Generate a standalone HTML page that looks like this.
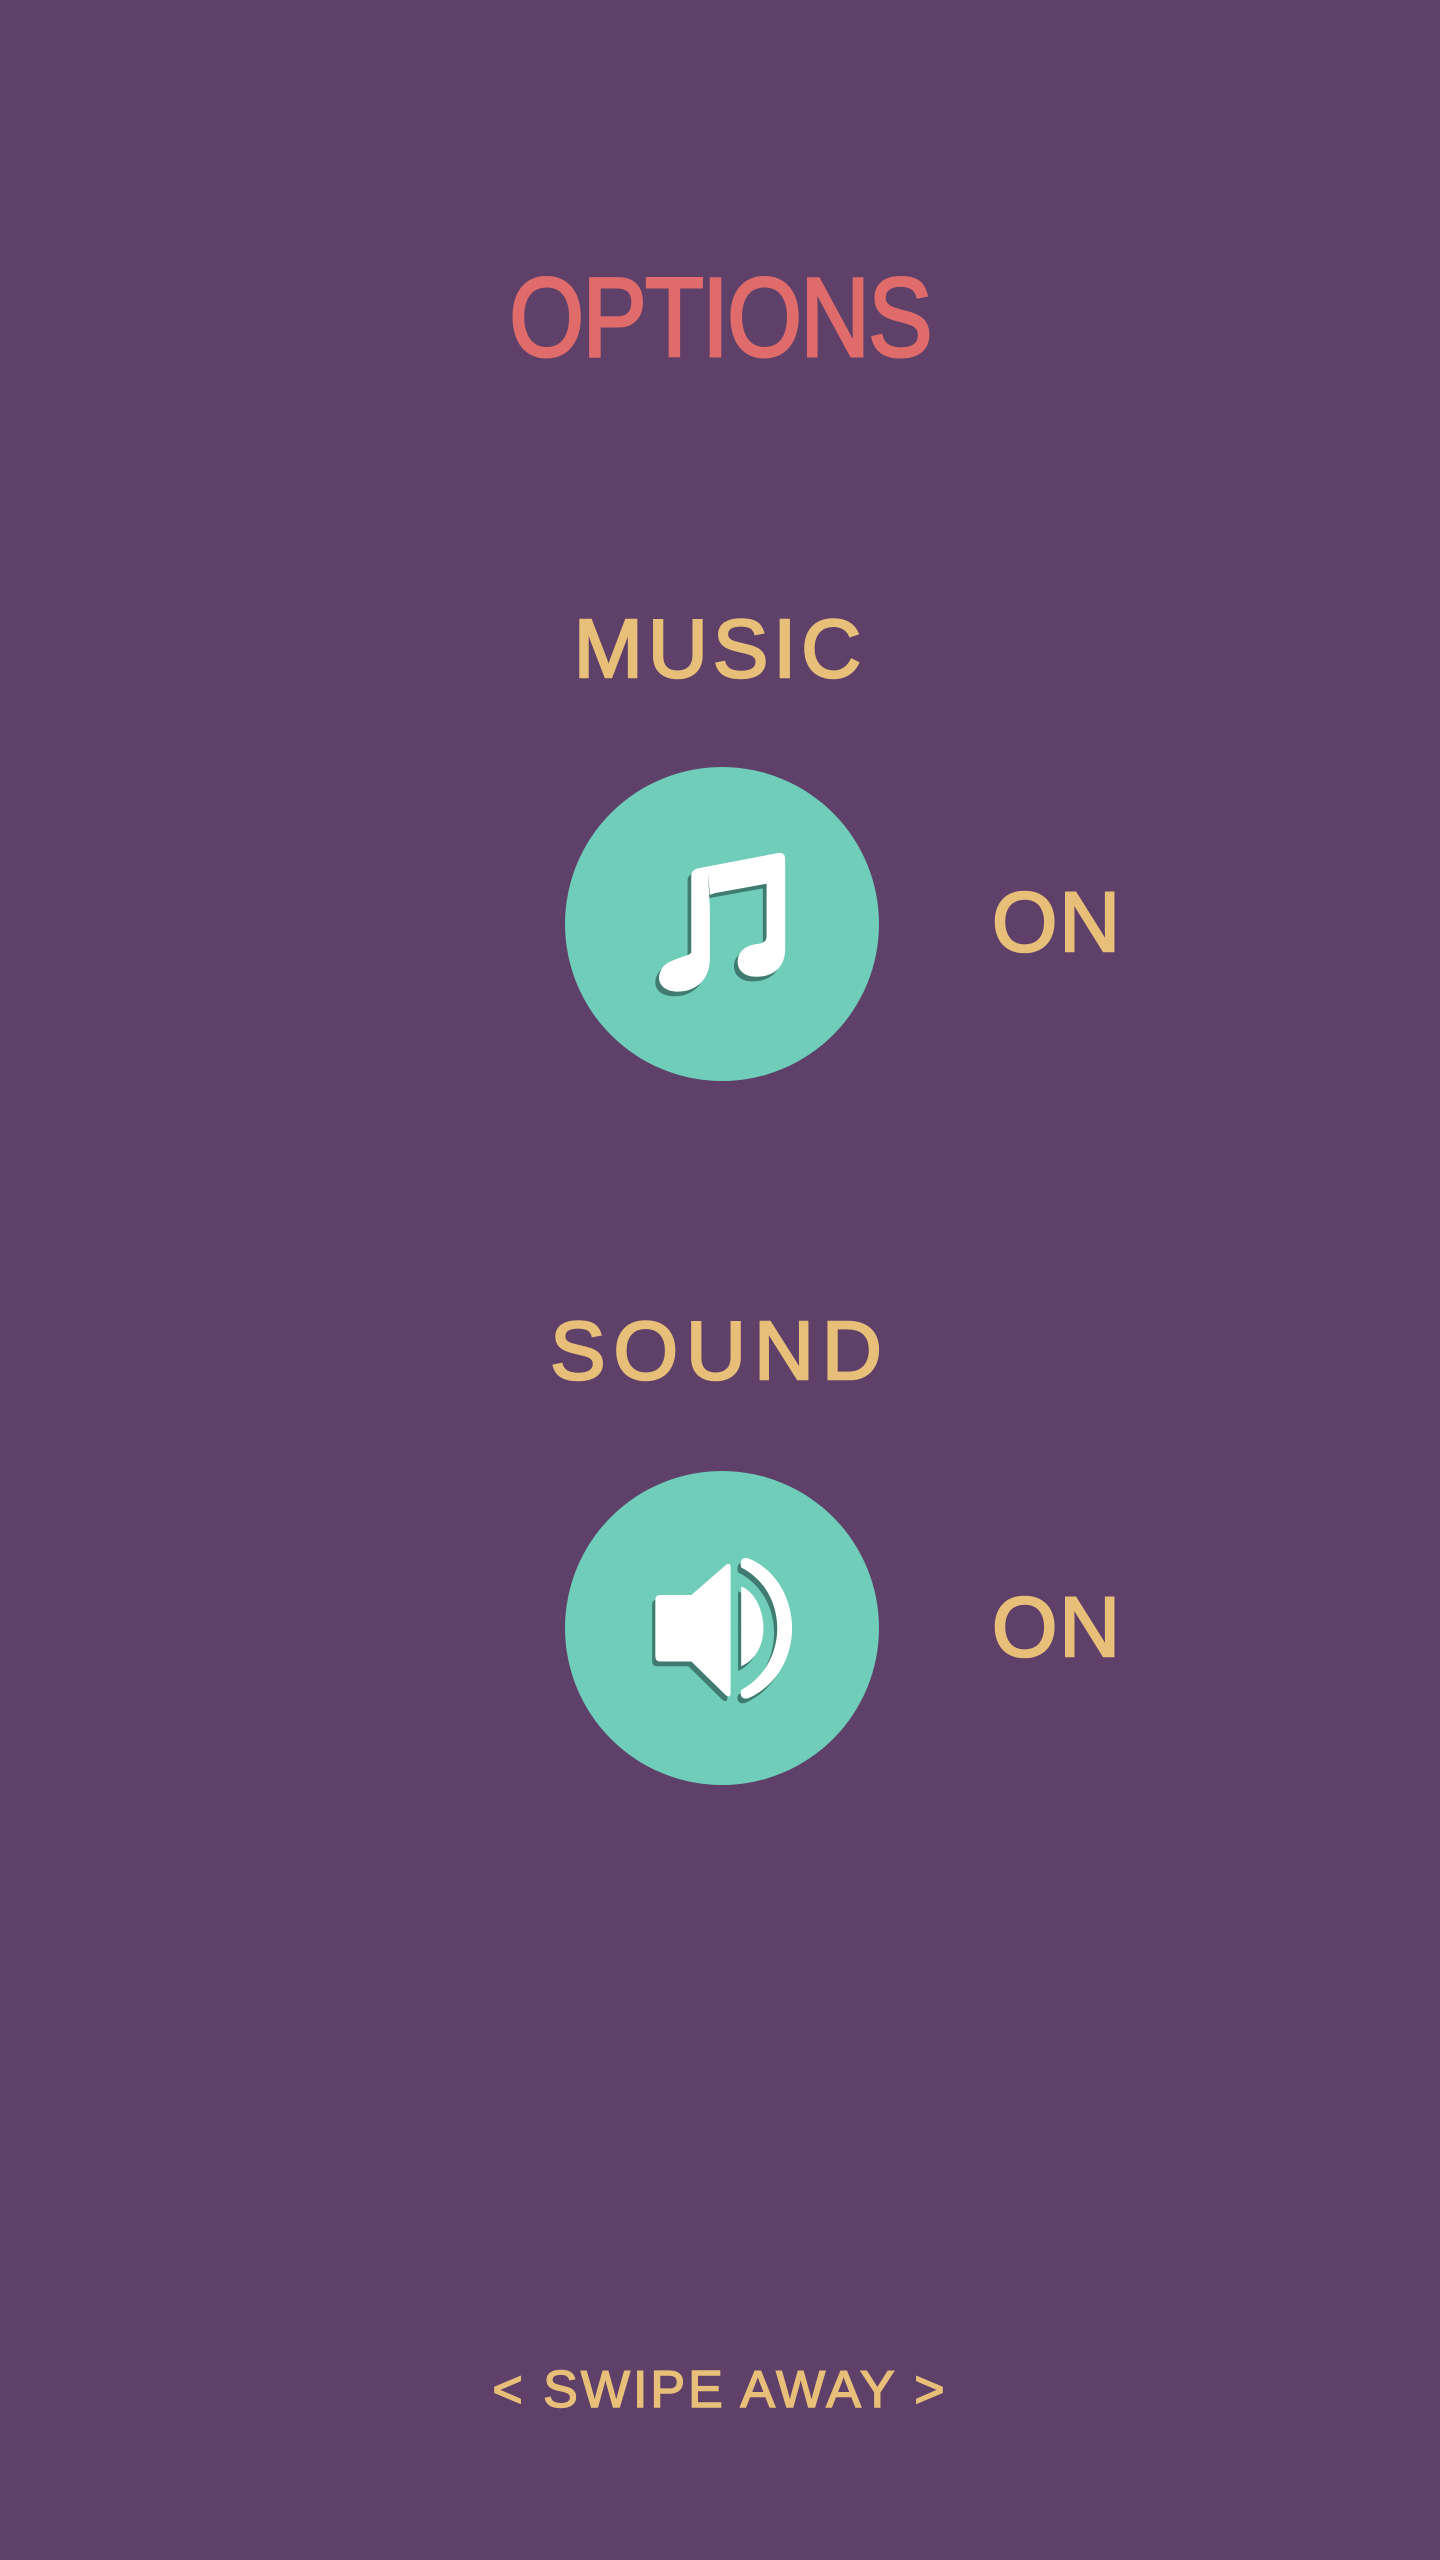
<!DOCTYPE html>
<html><head><meta charset="utf-8"><style>
html,body{margin:0;padding:0}
body{width:1440px;height:2560px;background:#5e4069;position:relative;overflow:hidden;font-family:"Liberation Sans",sans-serif}
.t{position:absolute;left:0;width:1440px;text-align:center;line-height:1;white-space:nowrap}
.circ{position:absolute;width:314px;height:314px;border-radius:50%;background:#6fcdb9}
.on{position:absolute;color:#e8bf78;font-size:84px;letter-spacing:2px;line-height:1;-webkit-text-stroke:2.5px #e8bf78}
.g{color:#e8bf78;-webkit-text-stroke:2.5px #e8bf78}
</style></head><body>
<div class="t" style="top:262px;color:#e06b6b;font-size:112px;letter-spacing:-2px;transform:scaleX(0.86);-webkit-text-stroke:3px #e06b6b">OPTIONS</div>
<div class="t g" style="top:607px;font-size:83px;letter-spacing:5px;">MUSIC</div>
<div class="circ" style="left:565px;top:767px"></div>
<svg style="position:absolute;left:565px;top:767px" width="314" height="314" viewBox="0 0 314 314">
 <g transform="translate(50,20) scale(0.93)">
 <g transform="translate(-4,5)" fill="#3f7b70">
  <path d="M100 92 L102 130 L102 185 C102 206 88 220 68 220 C50 220 43 208 50 196 C54 188 64 186 80 180 L82 178 L82 96 C82 90 86 88 92 87 L175 71 C181 70 183 73 183 78 L183 174 C183 194 170 204 152 204 C138 204 131 196 132 186 C133 176 142 170 152 169 C160 168 163 166 163 160 L163 104 L108 114 L102 116 Z"/>
 </g>
 <g fill="#fff">
  <path d="M100 92 L102 130 L102 185 C102 206 88 220 68 220 C50 220 43 208 50 196 C54 188 64 186 80 180 L82 178 L82 96 C82 90 86 88 92 87 L175 71 C181 70 183 73 183 78 L183 174 C183 194 170 204 152 204 C138 204 131 196 132 186 C133 176 142 170 152 169 C160 168 163 166 163 160 L163 104 L108 114 L102 116 Z"/>
 </g>
 </g>
</svg>
<div class="on" style="left:992px;top:880px">ON</div>
<div class="t g" style="top:1309px;font-size:83px;letter-spacing:8px;">SOUND</div>
<div class="circ" style="left:565px;top:1471px"></div>
<svg style="position:absolute;left:565px;top:1471px" width="314" height="314" viewBox="0 0 314 314">
 <g transform="translate(-4,10) scale(1.06,0.95)">
 <g transform="translate(-3,5)" fill="#3f7b70">
  <path d="M94 120 L123 120 L155 89 C158 86 160 87 160 91 L160 223 C160 227 158 228 155 225 L123 190 L94 190 C90 190 89 188 89 184 L89 126 C89 122 90 120 94 120 Z"/>
  <path d="M170 111 C184 117 191 138 191 155 C191 172 184 188 170 195 Z"/>
  <path d="M170 91 C168 83 172 79 178 82 C203 94 218 124 218 155 C218 186 203 215 178 228 C172 231 168 227 170 220 C193 206 204 180 204 155 C204 130 193 104 170 91 Z"/>
 </g>
 <g fill="#fff">
  <path d="M94 120 L123 120 L155 89 C158 86 160 87 160 91 L160 223 C160 227 158 228 155 225 L123 190 L94 190 C90 190 89 188 89 184 L89 126 C89 122 90 120 94 120 Z"/>
  <path d="M170 111 C184 117 191 138 191 155 C191 172 184 188 170 195 Z"/>
  <path d="M170 91 C168 83 172 79 178 82 C203 94 218 124 218 155 C218 186 203 215 178 228 C172 231 168 227 170 220 C193 206 204 180 204 155 C204 130 193 104 170 91 Z"/>
 </g>
 </g>
</svg>
<div class="on" style="left:992px;top:1585px">ON</div>
<div class="t g" style="top:2364px;font-size:52px;letter-spacing:3px;-webkit-text-stroke:1.5px #e8bf78">&lt; SWIPE AWAY &gt;</div>
</body></html>
